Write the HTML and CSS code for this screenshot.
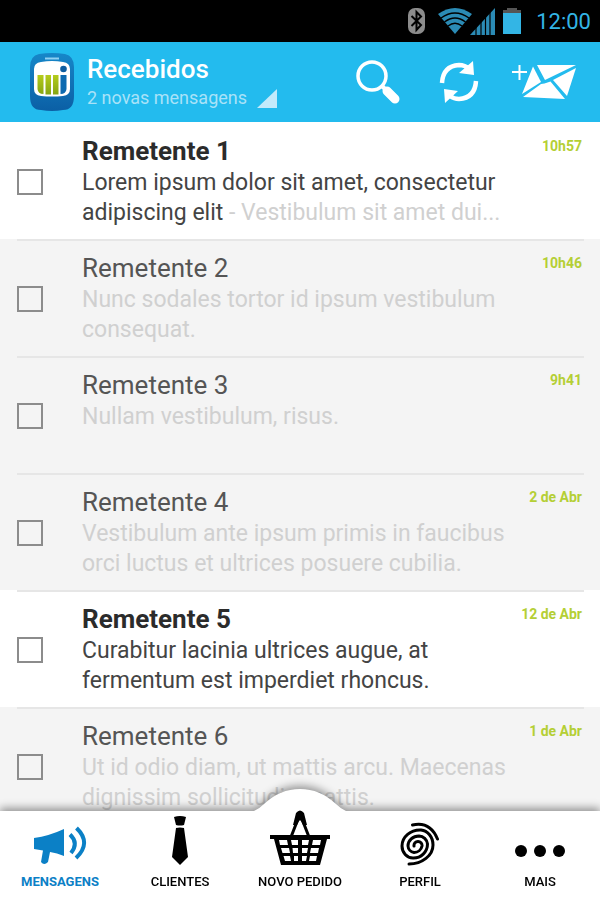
FILE: index.html
```html
<!DOCTYPE html>
<html lang="pt-br">
<head>
    <meta charset="UTF-8">
    <meta name="viewport" content="width=device-width, initial-scale=1.0">
    <title>Recebidos</title>
    <link rel="stylesheet" href="styles.css">
</head>
<body>
    <div class="status-bar">
        <svg width="18" height="26" viewBox="0 0 18 26">
            <rect x="0" y="0" width="17" height="26" rx="7" fill="#8c8c8c"/>
            <path d="M3.500 8 L13 17 L8.500 22 V4 L13 8.500 L3.500 18" fill="none" stroke="#000" stroke-width="2"/>
        </svg>
        <svg class="wifi" width="34" height="26" viewBox="0 0 34 26">
            <path d="M0 6 Q17 -6 34 6 L17 26 Z" fill="#2b8bb5"/>
            <path d="M3 10 Q17 0 31 10 M6.500 14 Q17 6 27.500 14 M10 18 Q17 12.500 24 18" fill="none" stroke="#000" stroke-width="1.500"/>
        </svg>
        <svg class="signal" width="25" height="27" viewBox="0 0 25 27">
            <path d="M0 27 L25 0 V27 Z" fill="#2b8bb5"/>
            <path d="M6 16 V27 M11 10 V27 M15.500 6 V27 M20 1 V27" stroke="#000" stroke-width="1.200"/>
        </svg>
        <svg class="battery" width="18" height="26" viewBox="0 0 18 26">
            <path d="M4 0 H14 V2 H18 V6 H0 V2 H4 Z" fill="#555"/>
            <rect y="5" width="18" height="21" fill="#33b5e5"/>
        </svg>
        <span class="clock">12:00</span>
    </div>

    <header class="header">
        <svg class="logo" width="44" height="58" viewBox="0 0 44 58">
            <defs>
                <linearGradient id="logoBlue" x1="0" y1="0" x2="0" y2="1">
                    <stop offset="0" stop-color="#1687c9"/>
                    <stop offset="1" stop-color="#0b5fa5"/>
                </linearGradient>
                <linearGradient id="logoGreen" x1="0" y1="0" x2="0" y2="1">
                    <stop offset="0" stop-color="#b5cc1b"/>
                    <stop offset="1" stop-color="#86a512"/>
                </linearGradient>
            </defs>
            <path d="M9 1 Q22 -1 35 1 Q44 3 44 14 V43 Q44 57 33 57 Q22 59 11 57 Q0 57 0 43 V14 Q0 3 9 1 Z" fill="url(#logoBlue)"/>
            <path d="M15 5.500 H29" stroke="#8fd0f2" stroke-width="2"/>
            <path d="M11 9 Q22 7 33 9 Q40 10 40 16 V36 Q40 42 33 43 Q22 44 11 43 Q4 42 4 36 V16 Q4 10 11 9 Z" fill="#fff"/>
            <path d="M7.500 22 H13.500 V41 Q8 41 7.500 36 Z M15.500 22 H21 V41.500 H15.500 Z M23 22 H28.500 V41.500 H23 Z" fill="url(#logoGreen)"/>
            <path d="M30.500 22 H36.500 V36 Q36 41 30.500 41 Z" fill="#0d6ab0"/>
            <circle cx="33.500" cy="16" r="3.300" fill="#0d5da0"/>
        </svg>
        <button type="button" class="folder">
            <span class="folder-name">Recebidos</span>
            <span class="folder-info">2 novas mensagens
                <svg width="20" height="19" viewBox="0 0 20 19"><path d="M20 0 V19 H0 Z" fill="#c3eafb"/></svg>
            </span>
        </button>
        <button type="button" class="action" aria-label="Buscar">
            <svg width="46" height="46" viewBox="0 0 46 46">
                <circle cx="17" cy="17" r="14" fill="none" stroke="#fff" stroke-width="3.500"/>
                <path d="M27 27 L32 32" stroke="#fff" stroke-width="4"/>
                <path d="M31 31 L41 41" stroke="#fff" stroke-width="8"/>
                <path d="M32 32 L40 40" stroke="#fff" stroke-width="9" stroke-linecap="round"/>
            </svg>
        </button>
        <button type="button" class="action" aria-label="Atualizar">
            <svg width="40" height="42" viewBox="0 0 40 42">
                <path d="M3 22 Q4 5 20 4 Q26 4 30 8 M37 20 Q36 37 20 38 Q15 38 11 35" fill="none" stroke="#fff" stroke-width="4.500"/>
                <path d="M34 0 L35 14 L20 12 Z M6 42 L5 28 L19 30 Z" fill="#fff"/>
            </svg>
        </button>
        <button type="button" class="action compose" aria-label="Escrever mensagem">
            <svg width="66" height="38" viewBox="0 0 66 38">
                <path d="M0 9 H15 M7.500 2 V17" stroke="#fff" stroke-width="2"/>
                <path d="M25 2 H64 L33 17 Z" fill="#fff"/>
                <path d="M21 3.500 L29 19 L10 31 Z" fill="#fff"/>
                <path d="M64 5 L55 33 L41 17 Z" fill="#fff"/>
                <path d="M11 34 L29 21 L32.500 20.500 L38.500 18.500 L53 36 Z" fill="#fff"/>
            </svg>
        </button>
    </header>

    <ul class="messages">
        <li class="message unread">
            <div class="message-inner">
                <input type="checkbox" id="msg1" class="check">
                <label for="msg1" class="message-body">
                    <span class="sender">Remetente 1</span>
                    <span class="text">Lorem ipsum dolor sit amet, consectetur adipiscing elit <span class="preview">- Vestibulum sit amet dui...</span></span>
                </label>
                <time class="time">10h57</time>
            </div>
        </li>
        <li class="message">
            <div class="message-inner">
                <input type="checkbox" id="msg2" class="check">
                <label for="msg2" class="message-body">
                    <span class="sender">Remetente 2</span>
                    <span class="text">Nunc sodales tortor id ipsum vestibulum consequat.</span>
                </label>
                <time class="time">10h46</time>
            </div>
        </li>
        <li class="message">
            <div class="message-inner">
                <input type="checkbox" id="msg3" class="check">
                <label for="msg3" class="message-body">
                    <span class="sender">Remetente 3</span>
                    <span class="text">Nullam vestibulum, risus.</span>
                </label>
                <time class="time">9h41</time>
            </div>
        </li>
        <li class="message">
            <div class="message-inner">
                <input type="checkbox" id="msg4" class="check">
                <label for="msg4" class="message-body">
                    <span class="sender">Remetente 4</span>
                    <span class="text">Vestibulum ante ipsum primis in faucibus orci luctus et ultrices posuere cubilia.</span>
                </label>
                <time class="time">2 de Abr</time>
            </div>
        </li>
        <li class="message unread">
            <div class="message-inner">
                <input type="checkbox" id="msg5" class="check">
                <label for="msg5" class="message-body">
                    <span class="sender">Remetente 5</span>
                    <span class="text">Curabitur lacinia ultrices augue, at fermentum est imperdiet rhoncus.</span>
                </label>
                <time class="time">12 de Abr</time>
            </div>
        </li>
        <li class="message">
            <div class="message-inner">
                <input type="checkbox" id="msg6" class="check">
                <label for="msg6" class="message-body">
                    <span class="sender">Remetente 6</span>
                    <span class="text">Ut id odio diam, ut mattis arcu. Maecenas dignissim sollicitudin mattis.</span>
                </label>
                <time class="time">1 de Abr</time>
            </div>
        </li>
    </ul>

    <nav class="tabs">
        <svg class="bump" width="92" height="22" viewBox="0 0 92 22">
            <path d="M0 22 Q5 20 10 15 Q26 0 46 0 Q66 0 82 15 Q87 20 92 22 Z" fill="#fff"/>
        </svg>
        <a href="#mensagens" class="tab active">
            <svg width="54" height="40" viewBox="0 0 54 40">
                <path d="M1 12 Q16 10 31 3 V30 Q24 27 17 26 L15 36 Q11 40 8 36 L10 24.500 L1 23 Z" fill="#0b80c6"/>
                <path d="M37 8.500 Q46 17 38 27 M43.500 2 Q59 17 43 32" fill="none" stroke="#0b80c6" stroke-width="4"/>
            </svg>
            Mensagens
        </a>
        <a href="#clientes" class="tab">
            <svg width="18" height="50" viewBox="0 0 18 50">
                <path d="M3 1 Q9 -1 15 1 L13 9 Q9 10 5 9 Z M5 12 Q9 11 13 12 L17 41 L9 49 L1 41 Z" fill="#000"/>
            </svg>
            Clientes
        </a>
        <a href="#novo-pedido" class="tab">
            <svg width="60" height="56" viewBox="0 0 60 56">
                <path d="M21 27 L28 9 H32 L39 27" fill="none" stroke="#000" stroke-width="3"/>
                <path d="M23 15 L26 3 Q30 -2 34 3 L37 15 L33 15 L30 9 L27 15 Z" fill="#000"/>
                <path d="M0 25 H60 V29 H57 L50 55 H11 L4 29 H0 Z" fill="#000"/>
                <path d="M9 30 H17 L18 35 H10 Z M21 30 H28 V35 H22 Z M32 30 H39 L38 35 H32 Z M43 30 H51 L50 35 H42 Z
                         M11 38 H19 L20 43 H12.500 Z M22.500 38 H28 V43 H23 Z M32 38 H38 L37 43 H32 Z M41 38 H49 L48 43 H40 Z
                         M13.500 46 H20 L21 51 H15 Z M24 46 H28 V51 H24 Z M32 46 H37 L36 51 H32 Z M40 46 H47 L46 51 H39 Z" fill="#fff"/>
            </svg>
            Novo pedido
        </a>
        <a href="#perfil" class="tab">
            <svg width="40" height="44" viewBox="0 0 40 44">
                <path d="M12.500 3 Q30 -1 37.500 17 M9 42 A24 19 0 0 0 33 23 A13 15 0 0 0 21 8 A18 16 0 0 0 2 24 A11 12 0 0 0 13 36 A14 14 0 0 0 27.500 22 A9 9 0 0 0 19 14 A11 10 0 0 0 8 24 A7 7 0 0 0 14 30.500 A8 8 0 0 0 22 24 A4 4 0 0 0 18 19.500 A4 4 0 0 0 14 24" fill="none" stroke="#000" stroke-width="3" stroke-linecap="round"/>
            </svg>
            Perfil
        </a>
        <a href="#mais" class="tab">
            <svg width="50" height="14" viewBox="0 0 50 14">
                <circle cx="6" cy="7" r="6"/>
                <circle cx="25" cy="7" r="6"/>
                <circle cx="44" cy="7" r="6"/>
            </svg>
            Mais
        </a>
    </nav>
</body>
</html>
```

FILE: styles.css
```css
* {
    box-sizing: border-box;
}
body {
    font-family: Roboto, 'Liberation Sans', sans-serif;
    background: #f4f4f4;
    color: #444;
    margin: 0;
    height: 100vh;
    display: flex;
    flex-direction: column;
    overflow: hidden;
}
button {
    background: none;
    border: none;
    padding: 0;
    font-family: inherit;
    color: inherit;
    cursor: pointer;
}
svg {
    display: block;
    flex-shrink: 0;
}

/* Barra de status */
.status-bar {
    display: flex;
    align-items: center;
    justify-content: flex-end;
    flex-shrink: 0;
    height: 42px;
    padding-right: 9px;
    background: #000;
}
.wifi {
    margin-left: 12px;
}
.signal {
    margin-left: -2px;
}
.battery {
    margin: 0 15px 0 8px;
}
.clock {
    font-size: 22px;
    color: #33b5e5;
}

/* Cabeçalho */
.header {
    display: flex;
    align-items: center;
    flex-shrink: 0;
    height: 80px;
    padding: 0 22px 0 30px;
    background: #23bbee;
    color: #fff;
}
.folder {
    display: flex;
    flex-direction: column;
    margin: 0 auto 0 13px;
    text-align: left;
}
.folder-name {
    font-size: 26px;
    font-weight: 500;
    line-height: 32px;
}
.folder-info {
    display: flex;
    align-items: center;
    gap: 10px;
    font-size: 18px;
    line-height: 26px;
    color: #a9e2f8;
}
.action {
    margin-left: 38px;
}
.compose {
    margin-left: 33px;
}

/* Lista de mensagens */
.messages {
    flex: 1;
    min-height: 0;
    overflow: hidden;
    list-style: none;
    margin: 0;
    padding: 0;
}
.message {
    padding: 0 16px 0 17px;
    background: #f4f4f4;
}
.message-inner {
    display: flex;
    align-items: center;
    min-height: 117px;
    border-top: 2px solid #e6e6e6;
}
.message:first-child .message-inner {
    border-top-color: transparent;
}
.check {
    appearance: none;
    flex-shrink: 0;
    width: 26px;
    height: 26px;
    margin: 0 39px 0 0;
    border: 2px solid #8c8c8c;
}
.check:checked {
    background: #23bbee;
}
.message-body {
    flex: 1;
    align-self: flex-start;
    padding-top: 12px;
    line-height: 30px;
}
.sender {
    display: block;
    margin-bottom: 2px;
    font-size: 26px;
    color: #555;
}
.text {
    display: block;
    font-size: 23px;
    color: #d0d0d0;
}
.time {
    align-self: flex-start;
    width: 68px;
    padding: 13px 2px 0 0;
    font-size: 14px;
    font-weight: 700;
    line-height: 18px;
    text-align: right;
    white-space: nowrap;
    color: #b4cf35;
}
.unread {
    background: #fff;
}
.unread .sender {
    font-weight: 700;
    color: #2b2b2b;
}
.unread .text {
    color: #444;
}
.unread .preview {
    color: #d0d0d0;
}

/* Menu inferior */
.tabs {
    position: relative;
    display: flex;
    flex-shrink: 0;
    height: 89px;
    background: #fff;
    filter: drop-shadow(0 -3px 4px rgba(0, 0, 0, 0.4));
}
.bump {
    position: absolute;
    left: calc(50% - 46px);
    bottom: 100%;
}
.tab {
    position: relative;
    display: flex;
    flex: 1 1 0;
    flex-direction: column;
    align-items: center;
    justify-content: flex-end;
    padding-bottom: 10px;
    font-size: 13px;
    font-weight: 500;
    line-height: 16px;
    text-transform: uppercase;
    text-decoration: none;
    white-space: nowrap;
    color: #000;
}
.tab svg {
    margin-bottom: 8px;
}
.tab:last-child svg {
    margin-bottom: 16px;
}
.active {
    font-weight: 700;
    color: #0b80c6;
}
```
